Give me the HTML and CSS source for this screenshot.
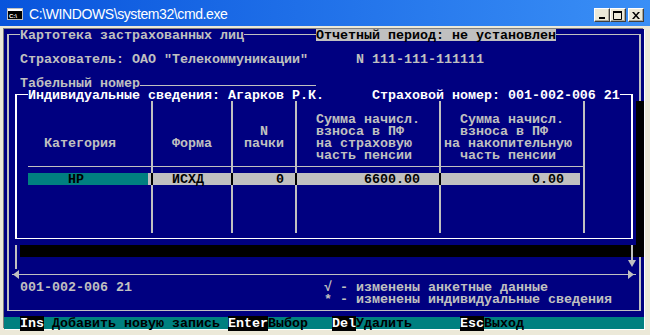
FILE: index.html
```html
<!DOCTYPE html>
<html>
<head>
    <meta charset="utf-8">
    <title>C:\WINDOWS\system32\cmd.exe</title>
    <link rel="stylesheet" href="styles.css">
</head>
<body>
    <div class="window">
        <div class="titlebar">
            <svg class="app-icon" width="16" height="12" viewBox="0 0 16 12">
                <rect x="0.5" y="0.5" width="15" height="11" fill="#000" stroke="#c0c0c0"/>
                <rect x="1" y="1" width="14" height="2" fill="#fff"/>
                <text x="2" y="9.5" font-family="Liberation Sans" font-size="6" font-weight="bold" fill="#fff">C:\</text>
            </svg>
            <span class="title">C:\WINDOWS\system32\cmd.exe</span>
            <div class="controls">
                <button class="ctl">
                    <svg width="8" height="8" viewBox="0 0 8 8"><rect x="1" y="6" width="6" height="2" fill="#000"/></svg>
                </button>
                <button class="ctl">
                    <svg width="10" height="9" viewBox="0 0 10 9"><path d="M0.5 1.5h8v7h-8z" fill="none" stroke="#000"/><rect x="0" y="0" width="9" height="2" fill="#000"/></svg>
                </button>
                <button class="ctl ctl-close">
                    <svg width="8" height="7" viewBox="0 0 8 7"><path d="M0 0h2l2 2.5l2-2.5h2l-3 3.5l3 3.5h-2l-2-2.5l-2 2.5h-2l3-3.5z" fill="#000"/></svg>
                </button>
            </div>
        </div>
        <div class="frame">
            <div class="console">
                <!-- outer card -->
                <div class="box box-outer"></div>
                <span class="txt r0 c2">Картотека застрахованных лиц</span>
                <span class="txt r0 c39 inverse">Отчетный период: не установлен</span>
                <span class="txt r2 c2">Страхователь: ОАО "Телекоммуникации"</span>
                <span class="txt r2 c44">N 111-111-111111</span>
                <span class="txt r4 c2">Табельный номер</span>
                <span class="field"></span>

                <!-- individual record -->
                <div class="box box-inner"></div>
                <span class="txt r5 c3 bright">Индивидуальные сведения: Агарков Р.К.      Страховой номер: 001-002-006 21</span>

                <span class="vline v18"></span>
                <span class="vline v28"></span>
                <span class="vline v36"></span>
                <span class="vline v54"></span>
                <span class="vline v72"></span>
                <span class="hline"></span>

                <span class="txt r7 c39 clear">Сумма начисл.</span>
                <span class="txt r7 c57 clear">Сумма начисл.</span>
                <span class="txt r8 c32 clear">N</span>
                <span class="txt r8 c39 clear">взноса в ПФ</span>
                <span class="txt r8 c57 clear">взноса в ПФ</span>
                <span class="txt r9 c5 clear">Категория</span>
                <span class="txt r9 c21 clear">Форма</span>
                <span class="txt r9 c30 clear">пачки</span>
                <span class="txt r9 c39 clear">на страховую</span>
                <span class="txt r9 c55 clear">на накопительную</span>
                <span class="txt r10 c39 clear">часть пенсии</span>
                <span class="txt r10 c57 clear">часть пенсии</span>

                <span class="row-cur row-cur-key"></span>
                <span class="row-cur row-cur-rest"></span>
                <span class="sep v18"></span>
                <span class="sep v28"></span>
                <span class="sep v36"></span>
                <span class="sep v54"></span>
                <span class="txt r12 c8 dark">НР</span>
                <span class="txt r12 c21 dark">ИСХД</span>
                <span class="txt r12 c34 dark">0</span>
                <span class="txt r12 c45 dark">6600.00</span>
                <span class="txt r12 c66 dark">0.00</span>

                <span class="shadow shadow-right"></span>
                <span class="shadow shadow-bottom"></span>

                <!-- scroll marks -->
                <span class="track track-left"></span>
                <span class="track track-right"></span>
                <span class="down-mark"></span>
                <span class="hscroll"></span>

                <span class="txt r21 c2 clear">001-002-006 21</span>
                <span class="txt r21 c40 clear">√ - изменены анкетные данные</span>
                <span class="txt r22 c40 clear">* - изменены индивидуальные сведения</span>

                <div class="statusbar">  <span class="key">Ins</span> Добавить новую запись <span class="key">Enter</span>Выбор   <span class="key">Del</span>Удалить      <span class="key">Esc</span>Выход</div>
            </div>
        </div>
    </div>
</body>
</html>
```

FILE: styles.css
```css
body {
    margin: 0;
    background: #ece9d8;
}

.window {
    width: 650px;
    height: 335px;
    background: #ece9d8;
    overflow: hidden;
}

/* title bar */

.titlebar {
    height: 26px;
    display: flex;
    align-items: center;
    padding-left: 7px;
    background: linear-gradient(to right, #0854dc, #3a8ff6);
    color: #fff;
    font-family: 'Liberation Sans', sans-serif;
}

.app-icon {
    flex: none;
    margin-top: 2px;
}

.title {
    margin-left: 6px;
    margin-top: 1px;
    font-size: 14px;
    letter-spacing: -0.4px;
}

.controls {
    margin-left: auto;
    margin-right: 6px;
    margin-top: 4px;
    display: flex;
}

.ctl {
    width: 16px;
    height: 14px;
    padding: 0;
    display: flex;
    align-items: center;
    justify-content: center;
    background: #ece9d8;
    border: 1px solid;
    border-color: #fff #404040 #404040 #fff;
    box-shadow: inset -1px -1px #aca899;
}

.ctl-close {
    margin-left: 2px;
}

/* console */

.frame {
    padding: 3px 6px 6px 4px;
}

.console {
    width: 640px;
    height: 300px;
    display: grid;
    grid-template-columns: repeat(80, 8px);
    grid-template-rows: repeat(25, 12px);
    background: #000080;
    box-shadow: -1px -1px 0 #808080, 1px 1px 0 #fff;
    color: #c0c0c0;
    font-family: 'Liberation Mono', monospace;
    font-size: 13.333px;
    font-weight: bold;
    line-height: 12px;
}

.txt {
    justify-self: start;
    padding-top: 1px;
    white-space: pre;
    background: #000080;
}

.txt.clear {
    background: none;
}

.txt.inverse {
    background: #c0c0c0;
    color: #000;
}

.txt.bright {
    color: #fff;
}

.txt.dark {
    background: none;
    color: #000;
}

.r0 { grid-row: 1; }
.r2 { grid-row: 3; }
.r4 { grid-row: 5; }
.r5 { grid-row: 6; }
.r7 { grid-row: 8; }
.r8 { grid-row: 9; }
.r9 { grid-row: 10; }
.r10 { grid-row: 11; }
.r12 { grid-row: 13; }
.r21 { grid-row: 22; }
.r22 { grid-row: 23; }

.c2 { grid-column-start: 3; }
.c3 { grid-column-start: 4; }
.c5 { grid-column-start: 6; }
.c8 { grid-column-start: 9; }
.c21 { grid-column-start: 22; }
.c30 { grid-column-start: 31; }
.c32 { grid-column-start: 33; }
.c34 { grid-column-start: 35; }
.c39 { grid-column-start: 40; }
.c40 { grid-column-start: 41; }
.c44 { grid-column-start: 45; }
.c45 { grid-column-start: 46; }
.c55 { grid-column-start: 56; }
.c57 { grid-column-start: 58; }
.c66 { grid-column-start: 67; }

.box {
    border: solid;
    border-width: 1px 2px;
}

.box-outer {
    grid-area: 1 / 1 / 25 / 81;
    margin: 5px 3px 6px 3px;
    border-color: #c0c0c0;
}

.box-inner {
    grid-area: 6 / 2 / 19 / 80;
    margin: 5px 3px 6px 3px;
    border-color: #fff;
}

.field {
    grid-area: 5 / 18 / 6 / 40;
    margin-bottom: 3px;
    border-bottom: 1px solid #c0c0c0;
}

/* table grid lines */

.vline {
    grid-row: 7 / 18;
    background: linear-gradient(#c0c0c0, #c0c0c0) 3px 0 / 2px 100% no-repeat;
}

.v18 { grid-column: 19; }
.v28 { grid-column: 29; }
.v36 { grid-column: 37; }
.v54 { grid-column: 55; }
.v72 { grid-column: 73; }

.hline {
    grid-area: 12 / 4 / 13 / 74;
    margin: 5px 4px 6px 0;
    background: #c0c0c0;
}

.row-cur {
    grid-row: 13;
}

.row-cur-key {
    grid-column: 4 / 19;
    background: #008080;
}

.row-cur-rest {
    grid-column: 19 / 73;
    background: #c0c0c0;
}

.sep {
    grid-row: 13;
    background: linear-gradient(#000, #000) 3px 0 / 2px 100% no-repeat;
}

.shadow {
    background: #000;
}

.shadow-right {
    grid-area: 7 / 80 / 20 / 81;
}

.shadow-bottom {
    grid-area: 19 / 3 / 20 / 81;
}

/* scroll marks under the record */

.track {
    background: linear-gradient(#c0c0c0, #c0c0c0) 3px 0 / 2px 100% no-repeat;
}

.track-left {
    grid-area: 19 / 2 / 21 / 3;
}

.track-right {
    grid-area: 19 / 79 / 20 / 80;
}

.down-mark {
    grid-area: 20 / 79 / 21 / 80;
    background:
        linear-gradient(#c0c0c0, #c0c0c0) 3px 0 / 2px 4px no-repeat;
    position: relative;
}

.down-mark::after {
    content: "";
    position: absolute;
    left: 0;
    top: 3px;
    width: 8px;
    height: 7px;
    background: #c0c0c0;
    clip-path: polygon(0 0, 100% 0, 50% 100%);
}

.hscroll {
    grid-area: 21 / 2 / 22 / 80;
    position: relative;
    background: linear-gradient(#c0c0c0, #c0c0c0) 0 5px / 100% 1px no-repeat;
}

.hscroll::before,
.hscroll::after {
    content: "";
    position: absolute;
    top: 1px;
    width: 6px;
    height: 9px;
    background: #c0c0c0;
}

.hscroll::before {
    left: 1px;
    clip-path: polygon(0 50%, 100% 0, 100% 100%);
}

.hscroll::after {
    right: 2px;
    clip-path: polygon(0 0, 100% 50%, 0 100%);
}

/* key hints */

.statusbar {
    grid-area: 25 / 1 / 26 / 81;
    padding-top: 1px;
    white-space: pre;
    background: #008080;
    color: #000;
}

.key {
    background: #000;
    color: #fff;
}
```
